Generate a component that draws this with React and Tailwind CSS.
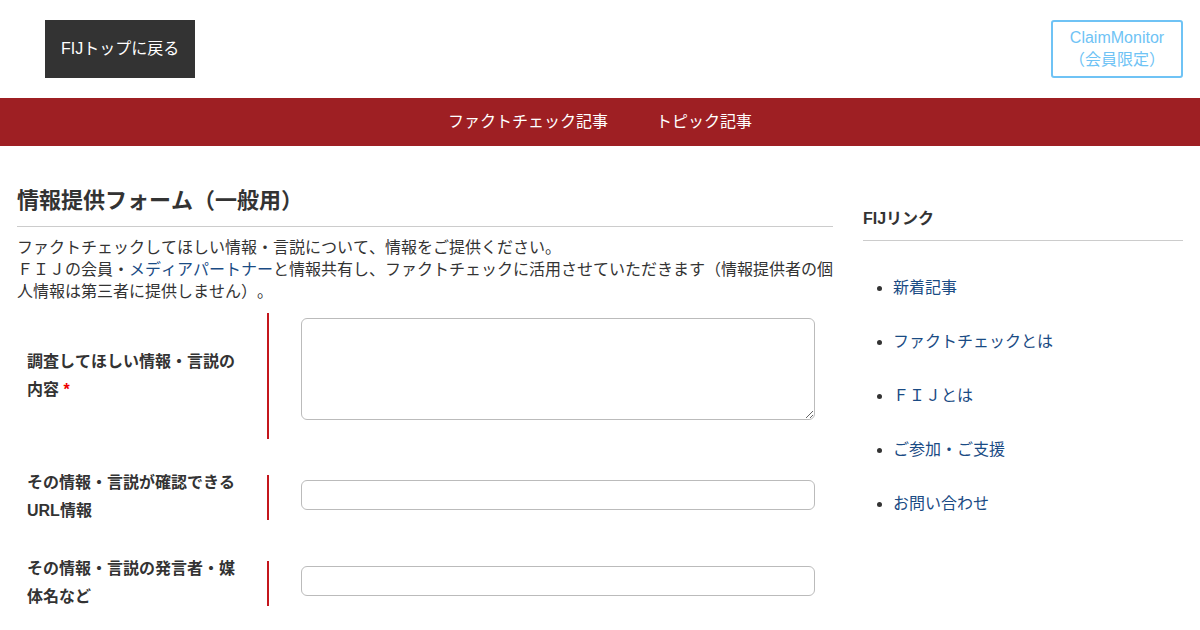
const navLinks = ["ファクトチェック記事", "トピック記事"];

const sideLinks = [
  "新着記事",
  "ファクトチェックとは",
  "ＦＩＪとは",
  "ご参加・ご支援",
  "お問い合わせ",
];

const fields = [
  { id: "content", label: "調査してほしい情報・言説の内容", required: true, multiline: true },
  { id: "url", label: "その情報・言説が確認できるURL情報" },
  { id: "speaker", label: "その情報・言説の発言者・媒体名など" },
];

function Header() {
  return (
    <header>
      <div className="flex items-center justify-between py-5 pl-[45px] pr-[17px]">
        <a href="#" className="bg-[#333333] text-white px-4 py-[18px]">
          FIJトップに戻る
        </a>
        <a
          href="#"
          className="border-2 border-[#6fc3f5] rounded-[3px] text-[#6fc3f5] text-center px-4 py-[5px]"
        >
          ClaimMonitor
          <br />
          （会員限定）
        </a>
      </div>
      <nav className="flex justify-center bg-[#9e1f23]">
        {navLinks.map((link) => (
          <a key={link} href="#" className="text-white px-6 py-[13px]">
            {link}
          </a>
        ))}
      </nav>
    </header>
  );
}

function FormRow({ field }) {
  const box = "block w-full border border-[#bbbbbb] rounded-md bg-white px-2";

  return (
    <div className="flex items-center">
      <label htmlFor={field.id} className="w-[250px] shrink-0 pl-[10px] pr-6 font-bold leading-7">
        {field.label}
        {field.required && <span className="text-[#ee0000]"> *</span>}
      </label>
      <div className="flex-1 border-l-2 border-[#c4161c] pl-8 pr-[18px] pt-[5px] pb-[10px]">
        {field.multiline ? (
          <textarea id={field.id} className={`${box} h-[102px] mb-[9px] resize`} />
        ) : (
          <input id={field.id} type="text" className={`${box} h-[30px]`} />
        )}
      </div>
    </div>
  );
}

function Sidebar() {
  return (
    <aside className="w-[320px] shrink-0 pt-5">
      <h2 className="font-bold border-b border-[#cccccc] pb-[10px]">FIJリンク</h2>
      <ul className="list-disc pl-[30px] mt-9 space-y-8">
        {sideLinks.map((link) => (
          <li key={link}>
            <a href="#" className="text-[#1a4b84]">{link}</a>
          </li>
        ))}
      </ul>
    </aside>
  );
}

export default function App() {
  return (
    <div
      lang="ja"
      className="bg-white text-[#333333] text-base leading-[22px] [font-kerning:none] [text-spacing-trim:space-all] font-['Liberation_Sans','Noto_Sans_CJK_JP',sans-serif]"
    >
      <Header />
      <div className="flex gap-[30px] px-[17px] pt-[42px]">
        <main className="flex-1 min-w-0">
          <h1 className="text-[22px] leading-[26px] font-bold border-b border-[#cccccc] pb-3">
            情報提供フォーム（一般用）
          </h1>
          <p className="mt-[10px] -mr-1">
            ファクトチェックしてほしい情報・言説について、情報をご提供ください。
            <br />
            ＦＩＪの会員・<a href="#" className="text-[#1a4b84]">メディアパートナー</a>
            と情報共有し、ファクトチェックに活用させていただきます（情報提供者の個人情報は第三者に提供しません）。
          </p>
          <form className="flex flex-col gap-[30px] mt-[10px]">
            {fields.map((field) => (
              <FormRow key={field.id} field={field} />
            ))}
          </form>
        </main>
        <Sidebar />
      </div>
    </div>
  );
}
